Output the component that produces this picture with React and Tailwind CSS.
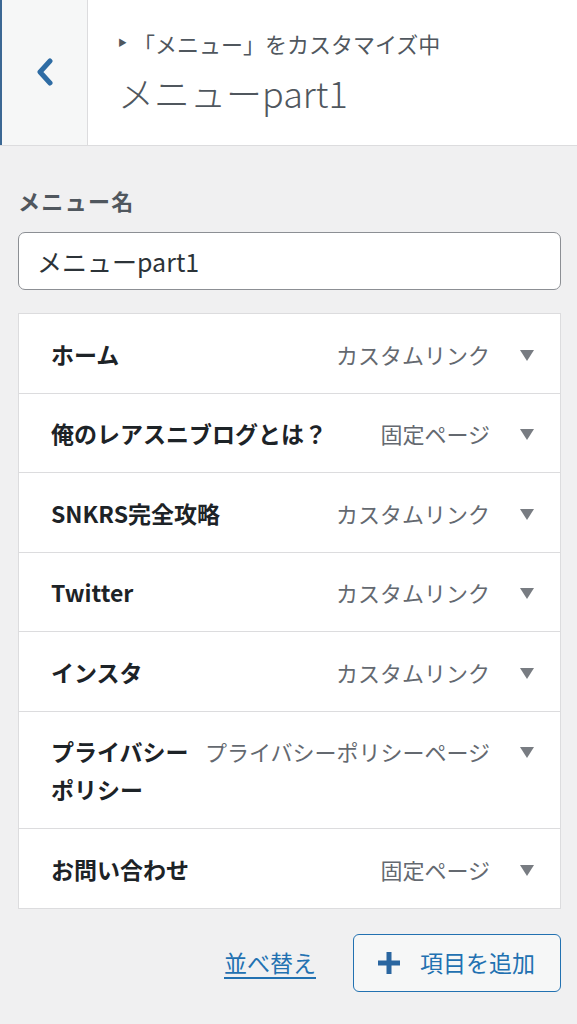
import React from "react";

const items = [
  { title: "ホーム", type: "カスタムリンク" },
  { title: "俺のレアスニブログとは？", type: "固定ページ" },
  { title: "SNKRS完全攻略", type: "カスタムリンク" },
  { title: "Twitter", type: "カスタムリンク" },
  { title: "インスタ", type: "カスタムリンク" },
  { title: "プライバシーポリシー", type: "プライバシーポリシーページ" },
  { title: "お問い合わせ", type: "固定ページ" },
];

const font = { fontFamily: '"Noto Sans CJK JP", "Noto Sans", sans-serif' };

const MenuItemRow = ({ item, last }) => (
  <div
    className={`flex items-start pl-[32px] pt-[20.5px] pb-[20px] ${
      last ? "" : "border-b border-[#dcdcde]"
    }`}
  >
    <div className="flex-1 min-w-0 text-[23px] leading-[38px] font-bold text-[#1d2327]">
      {item.title}
    </div>
    <div className="shrink-0 ml-[14px] text-[22px] leading-[38px] text-[#646970]">
      {item.type}
    </div>
    <div className="shrink-0 w-[70px] h-[38px] pl-[4px] flex items-center justify-center">
      <svg width="14" height="11" viewBox="0 0 14 11" className="mt-[3px]">
        <path d="M0 0 H14 L7 11 Z" fill="#787c82" />
      </svg>
    </div>
  </div>
);

export default function App() {
  return (
    <div className="w-[577px] min-h-[1024px] bg-[#f0f0f1]" style={font}>
      <header className="flex h-[146px] bg-white border-b border-[#dcdcde]">
        <button
          type="button"
          className="w-[88px] shrink-0 flex items-center justify-center bg-[#f6f7f7] border-l-2 border-l-[#3b6894] border-r border-r-[#dcdcde]"
          aria-label="戻る"
        >
          <svg width="18" height="28" viewBox="0 0 18 28" className="mb-[2px]">
            <path
              d="M14 3 L4 14 L14 25"
              fill="none"
              stroke="#2e6ca4"
              strokeWidth="5"
              strokeLinecap="round"
              strokeLinejoin="round"
            />
          </svg>
        </button>
        <div className="flex flex-col justify-center pl-[30px] pb-[2px]">
          <div className="flex items-center text-[22px] leading-[30px] text-[#50575e]">
            <span className="text-[9px] mr-[6px]">▶</span>
            <span>「メニュー」をカスタマイズ中</span>
          </div>
          <div className="text-[36px] leading-[48px] font-light text-[#50575e] mt-[10px]">
            メニューpart1
          </div>
        </div>
      </header>

      <main className="pl-[18px] pr-[16px] pt-[38px]">
        <label className="block text-[22px] leading-[32px] font-bold text-[#50575e] tracking-[0.06em]">
          メニュー名
        </label>
        <input
          className="mt-[16px] w-full h-[58px] px-[18px] bg-white border-[1.5px] border-[#8c8f94] rounded-[7px] text-[25px] text-[#2c3338] outline-none"
          style={font}
          defaultValue="メニューpart1"
        />

        <div className="mt-[23px] bg-white border border-[#dcdcde]">
          {items.map((item, i) => (
            <MenuItemRow key={item.title} item={item} last={i === items.length - 1} />
          ))}
        </div>

        <div className="flex items-center justify-end gap-[37px] mt-[25px]">
          <a href="#" className="text-[23px] text-[#2271b1] underline underline-offset-[5px]">
            並べ替え
          </a>
          <button
            type="button"
            className="flex items-center w-[208px] h-[58px] pl-[24px] bg-[#f6f7f7] border-[1.5px] border-[#2271b1] rounded-[6px] text-[#2271b1]"
          >
            <svg width="22" height="22" viewBox="0 0 22 22">
              <path d="M11 0 V22 M0 11 H22" stroke="#2a66a0" strokeWidth="5" />
            </svg>
            <span className="ml-[20px] text-[23px]">項目を追加</span>
          </button>
        </div>
      </main>
    </div>
  );
}
